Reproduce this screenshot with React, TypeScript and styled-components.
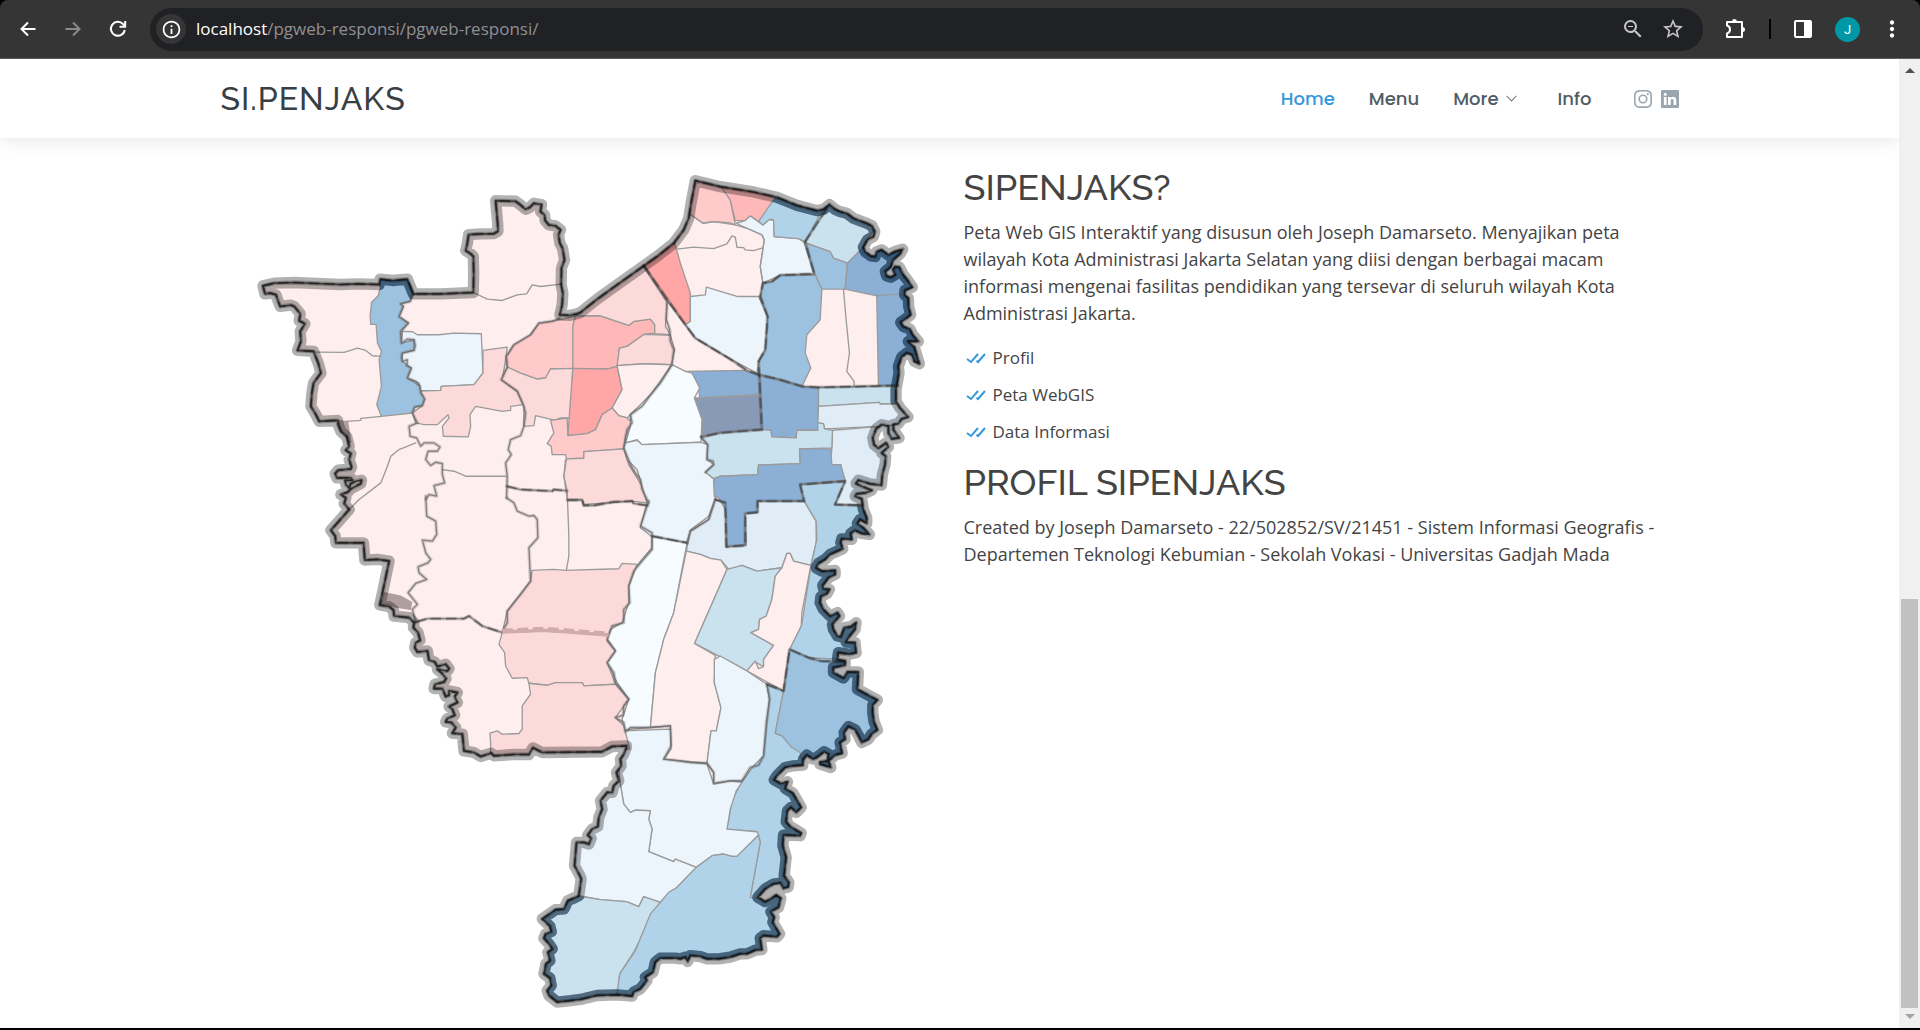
import React from "react";
import styled, { createGlobalStyle } from "styled-components";
import { BsInstagram, BsLinkedin, BsChevronDown } from "react-icons/bs";
import { BiCheckDouble } from "react-icons/bi";
import { MdInfoOutline, MdZoomOut, MdStarBorder, MdMoreVert } from "react-icons/md";

const GlobalStyle = createGlobalStyle`
  *, *::before, *::after { box-sizing: border-box; }
  body { margin: 0; background: #000; color: #444; font-family: "Open Sans", "Noto Sans", sans-serif; font-size: 18px; line-height: 27px; }
  h1, h3, p, ul { margin: 0; padding: 0; }
  a { color: inherit; text-decoration: none; }
  button { border: 0; padding: 0; background: none; color: inherit; font: inherit; cursor: pointer; }
`;

/* ---------- browser frame ---------- */

const Window = styled.div`
  display: flex;
  flex-direction: column;
  min-height: 100vh;
  border-bottom: 2px solid #000;
`;

const Toolbar = styled.div`
  display: flex;
  align-items: center;
  height: 59px;
  padding: 0 14px 0 10px;
  background: #353535;
  border-bottom: 1px solid #5e5e5e;
  border-radius: 8px 8px 0 0;
  color: #fff;
`;

const ToolGroup = styled.div<{ $gap: number }>`
  display: flex;
  align-items: center;
  gap: ${(p) => p.$gap}px;
`;

const ToolButton = styled.button<{ $dim?: boolean; $size?: number }>`
  display: grid;
  place-items: center;
  width: ${(p) => p.$size ?? 35}px;
  height: ${(p) => p.$size ?? 35}px;
  border-radius: 50%;
  color: ${(p) => (p.$dim ? "#8a8a8a" : "#fff")};
`;

const Omnibox = styled.div`
  display: flex;
  flex: 1;
  align-items: center;
  height: 43px;
  margin: 0 16px 0 15px;
  padding: 0 18px 0 6px;
  border-radius: 22px;
  background: #202124;
  color: #c7c7c7;
`;

const SiteInfo = styled(ToolButton)`
  background: #353535;
`;

const Address = styled.div`
  flex: 1;
  padding-left: 10px;
  color: #8f9094;
  font-size: 17px;
  line-height: 24px;
  span { color: #fff; }
`;

const Divider = styled.span`
  width: 2px;
  height: 20px;
  background: #000;
`;

const Avatar = styled.button`
  width: 25px;
  height: 25px;
  border-radius: 50%;
  background: #0097a7;
  color: #fff;
  font: 13px/25px Roboto, sans-serif;
`;

const Viewport = styled.div`
  display: flex;
  flex: 1;
  background: #fff;
`;

const Page = styled.div`
  flex: 1;
  min-width: 0;
`;

const ScrollTrack = styled.div`
  display: flex;
  flex-direction: column;
  align-items: center;
  justify-content: space-between;
  width: 21px;
  padding: 9px 2px;
  background: #f0f0f0;
`;

const ScrollArrow = styled.span<{ $down?: boolean }>`
  border: 5px solid transparent;
  border-top: ${(p) => (p.$down ? "5px solid #a3a3a3" : "0")};
  border-bottom: ${(p) => (p.$down ? "0" : "5px solid #505050")};
`;

const ScrollBody = styled.div`
  display: flex;
  flex: 1;
  flex-direction: column;
  justify-content: flex-end;
  width: 17px;
  padding: 6px 0;
`;

const ScrollThumb = styled.div`
  height: 44%;
  background: #c1c1c1;
`;

/* ---------- site ---------- */

const Header = styled.header`
  height: 79px;
  box-shadow: 0 2px 17px rgba(0, 0, 0, 0.1);
  clip-path: inset(0 0 -40px 0);
`;

const Container = styled.div`
  display: flex;
  align-items: center;
  height: 100%;
  max-width: 1486px;
  margin: 0 auto;
  padding: 0 14px;
`;

const Logo = styled.h1`
  flex: 1;
  color: #384046;
  font: 500 32px/40px Raleway, Lato, sans-serif;
  letter-spacing: 1px;
`;

const Nav = styled.nav`
  display: flex;
  align-items: center;
  gap: 34px;
  font: 500 18px/27px Poppins, Inter, sans-serif;
`;

const NavLink = styled.a<{ $active?: boolean; $menu?: boolean }>`
  display: flex;
  align-items: center;
  gap: 6px;
  padding-right: ${(p) => (p.$menu ? 6 : 0)}px;
  color: ${(p) => (p.$active ? "#3498db" : "#4f5c66")};
`;

const Social = styled.div`
  display: flex;
  gap: 9px;
  padding-left: 8px;
  color: #9aa6af;
  a { display: flex; }
`;

const Columns = styled.main`
  display: grid;
  grid-template-columns: 1fr 1fr;
  gap: 28px;
  max-width: 1486px;
  margin: 0 auto;
  padding: 22px 14px 12px;
`;

const MapFigure = styled.svg`
  display: block;
  width: 100%;
  height: auto;
`;

const About = styled.section`
  padding-top: 6px;
`;

const Title = styled.h3`
  margin-bottom: 10px;
  font: 500 36px/43px Raleway, Lato, sans-serif;
`;

const Features = styled.ul`
  padding: 17px 0 6px;
  list-style: none;
`;

const Feature = styled.li`
  display: flex;
  align-items: center;
  gap: 5px;
  padding-bottom: 10px;
  font-size: 17px;
  svg { color: #3498db; }
`;

/* ---------- district map ---------- */

type Sheet = [number, number];
const NW: Sheet = [0, 0];
const NE: Sheet = [1020, 0];
const W: Sheet = [180, 900];
const E: Sheet = [1080, 900];
const S: Sheet = [780, 1710];

/* moves points of one survey sheet into the common map grid */
const at = ([ox, oy]: Sheet, points: string) =>
  points
    .trim()
    .split(/\s+/)
    .map((p) => {
      const [x, y] = p.split(",").map(Number);
      return `${x + ox},${y + oy}`;
    })
    .join(" ");

const border = [
  at(NW, "66,378 100,370 160,368 230,371 300,374 350,372 415,374 418,358 455,362 500,358 518,402 600,402 698,398 699,340 698,290 690,282 675,272 680,250 684,224 720,222 760,221 772,214 771,190 765,122 825,124 840,135 855,148 868,142 880,130 903,134 900,155 912,165 914,182 925,195 945,198 960,210 954,225 958,250 966,265 972,300 963,325 962,375 967,400 965,435 958,465 985,467 1010,462"),
  at(NE, "0,458 50,418 100,382 190,318 235,286 280,250 310,210 325,175 332,130 345,62 420,80 520,96 590,112 650,136 710,152 730,148 748,134 765,148 780,155 800,160 820,175 860,190 876,198 884,215 880,230 862,240 850,262 855,275 872,288 885,290 890,275 905,270 925,285 945,275 968,268 960,282 940,300 932,322 916,335 920,348 932,352 945,345 938,330 945,320 958,322 970,345 982,360 997,382 975,392 974,405 985,415 986,440 992,465 980,475 962,488 970,500 990,508 998,525 1015,545 985,545 1003,562 1018,612 1003,605 995,585 980,580 965,592 955,620 957,640 948,690 948,725 960,745 984,772 965,778 955,792 940,795 940,810 957,835 935,838 925,820 925,800 905,795 888,808 878,835 882,855 895,866 918,850 925,862 905,880 917,890 915,915 907,945 904,977 870,973 835,962 828,972 845,980 875,992 858,1000 830,1003"),
  at(E, "765,110 785,118 790,150 800,175 800,192 780,180 772,192 790,205 808,225 785,222 765,213 752,222 755,240 725,238 722,250 728,268 690,285 675,300 655,312 648,325 665,335 705,333 705,345 685,355 668,378 670,388 688,390 680,403 662,412 660,430 670,450 690,470 712,460 718,470 697,495 700,510 712,530 722,532 732,505 752,502 768,490 765,510 745,535 738,548 765,550 768,580 748,585 715,580 712,600 735,605 735,618 700,625 700,640 730,656 742,638 775,638 772,690 800,705 832,722 818,738 818,760 822,788 832,812 815,825 805,840 785,850 775,830 765,812 745,802 732,820 735,840 720,850 726,882 705,888 685,905 692,925 660,915 660,908 682,905 685,885 672,878 650,895 638,900 620,888 610,900 608,918 580,920 555,925 530,950"),
  at(S, "822,152 842,163 862,158 855,178 878,192 890,212 903,235 888,250 872,235 862,245 858,278 870,292 903,312 900,320 850,318 848,350 858,385 852,440 866,460 864,474 850,478 840,462 820,465 795,480 773,505 795,518 810,510 828,498 842,508 835,535 812,548 822,565 818,580 838,615 830,624 790,620 780,628 785,662 765,664 740,675 720,675 690,685 655,690 620,690 600,683 570,680 562,698 555,685 540,690 525,688 480,688 465,700 458,730 435,745 440,755 420,780 400,790 395,802 350,798 290,800 240,812 205,816 170,820 145,800 140,785 152,770 148,748 130,735 136,705 148,695 142,670 155,660 145,645 130,628 135,615 152,608 148,592 125,570 165,542 190,540 202,515 225,505 235,500 242,450 238,440 222,410 228,340 250,340 265,345 272,328 262,318 275,300 292,292 295,265 305,240 300,215 320,190 335,190 340,170 355,155 348,130 362,110 360,90 370,75 378,55"),
  at(W, "978,860 935,862 905,878 725,880 697,866 685,886 640,886 580,890 572,882 540,892 520,880 490,875 485,825 455,822 465,805 452,790 435,788 440,778 462,768 455,750 445,742 470,730 462,712 470,700 445,695 445,708 435,712 425,688 400,688 403,675 430,668 436,658 422,640 410,630 440,635 445,628 435,615 410,622 402,608 385,603 380,575 350,578 342,565 345,550 358,543 352,520 338,505 340,490 325,475 280,470 278,452 265,442 237,437 245,400 265,305 230,300 192,302 188,250 105,250 103,230 90,212 145,150 130,132 135,115 120,105 140,98 150,88 180,72 182,62 165,65 150,72 145,85 135,75 133,62 155,62 150,55 108,55 103,42 112,32 150,28"),
  at(NW, "332,922 325,900 330,882 315,872 325,860 318,832 300,815 292,795 290,782 235,785 225,765 210,740 213,700 218,670 240,640 232,610 218,575 170,572 180,545 178,515 192,492 175,483 178,462 160,440 150,436 118,440 112,425 105,405 88,400 72,402"),
].join(" ");

const tone = {
  rose0: "#feeeee",
  rose1: "#fddada",
  rose2: "#ffcaca",
  rose3: "#ffb8b8",
  rose4: "#ffa6a6",
  ice: "#f6fcff",
  sky0: "#edf5fc",
  sky1: "#e0ecf6",
  sky2: "#cae1ee",
  sky3: "#b0d3e9",
  sky4: "#9dc2e0",
  sky5: "#8bafd5",
  slate: "#899ab7",
};

const regions: [keyof typeof tone, Sheet, string][] = [
  ["sky4", NW, "415,350 418,385 412,408 392,428 388,470 390,494 406,494 410,550 422,575 415,600 422,680 408,735 422,770 515,760 522,742 545,738 552,718 538,680 500,655 512,625 485,605 485,580 520,572 520,540 482,550 480,515 503,490 475,470 488,440 480,432 508,425 518,402 500,350"],
  ["sky0", NW, "485,515 515,516 530,525 595,525 640,520 722,522 727,640 700,675 602,680 600,692 540,694 535,670 500,655 512,625 485,605 485,580 520,572 520,540 482,550"],
  ["rose1", NW, "727,572 800,562 795,600 785,660 830,695 848,735 810,740 810,752 785,755 705,740 688,765 690,800 683,832 608,830 605,800 625,775 622,765 590,795 550,795 525,790 515,760 545,738 552,718 540,694 600,692 602,680 700,675 727,640"],
  ["rose2", NW, "1005,468 958,480 895,490 870,525 820,555 797,590 800,622 840,640 890,658 915,655 930,628 997,626 997,500"],
  ["rose1", NW, "800,622 840,640 890,658 915,655 930,628 997,626 990,775 960,775 945,782 885,768 880,798 850,800 850,740 830,695 782,660"],
  ["rose3", NW, "997,626 997,500 1005,468 1080,468 1165,497 1180,485 1230,478 1243,495 1243,520 1210,524 1160,560 1137,565 1130,620 1100,628"],
  ["rose4", NW, "997,626 1100,628 1130,620 1145,690 1115,745 1085,765 1065,810 1040,822 982,828"],
  ["rose1", NW, "1010,462 1212,310 1280,425 1275,500 1290,525 1243,522 1243,495 1230,478 1180,485 1165,497 1080,468 1005,468"],
  ["rose1", NW, "1137,565 1160,560 1210,524 1290,527 1303,570 1293,615 1210,612 1130,618"],
  ["rose0", NW, "1130,618 1210,612 1293,615 1240,700 1170,765 1160,775 1135,768 1115,745 1145,690"],
  ["rose2", NW, "982,828 1040,822 1065,810 1085,765 1115,745 1135,768 1160,775 1175,790 1155,830 1150,868 1030,876 1030,896 978,898 975,885 935,885 932,860 920,852 940,820 930,782 980,775"],
  ["rose1", NW, "978,898 1030,896 1030,876 1150,868 1165,915 1205,980 1220,1030 1175,1025 1100,1030 1030,1035 1025,1020 980,1020 970,950"],
  ["rose4", NE, "185,310 280,240 300,310 330,400 330,490 315,495 250,410"],
  ["rose2", NE, "325,160 340,50 420,70 450,120 465,195 445,188 400,185 368,190"],
  ["rose3", NE, "415,70 595,105 535,185 510,168 495,182 465,182 450,120"],
  ["sky0", NE, "468,190 495,182 510,168 548,195 568,178 580,182 582,230 655,236 672,248 702,342 600,346 548,370 540,320 552,240 545,225 500,205"],
  ["sky3", NE, "590,105 750,135 675,245 655,236 582,230 580,180 568,178 548,195 535,185"],
  ["sky2", NE, "742,120 900,180 850,262 802,310 760,295 750,275 675,248"],
  ["sky4", NE, "672,248 750,275 760,295 802,310 795,388 725,388 705,345"],
  ["sky5", NE, "850,262 1020,230 1030,400 890,408 795,388 802,310"],
  ["sky5", NE, "890,408 1040,395 1040,680 895,678"],
  ["sky4", NE, "548,370 575,365 600,346 705,345 725,388 720,480 680,525 675,580 692,625 665,680 600,660 535,645 535,605 555,570 562,470 540,410"],
  ["sky0", NE, "330,410 375,405 378,382 470,410 535,410 562,470 555,570 535,605 530,640 440,592 345,535 315,495 330,485"],
  ["sky5", NE, "315,635 490,632 540,645 540,705 358,715 355,680 340,660"],
  ["slate", NE, "342,715 358,715 530,706 540,710 545,810 420,820 365,828 365,780 345,745"],
  ["sky5", NE, "540,645 665,680 715,683 713,812 650,812 648,835 575,832 572,812 545,810"],
  ["sky2", NE, "715,683 960,678 990,733 900,733 898,728 715,740"],
  ["sky1", NE, "715,740 898,728 900,733 1000,733 1000,790 900,800 733,808 730,792 713,790"],
  ["sky1", NE, "757,812 755,865 752,915 782,915 785,955 795,960 765,1035 850,1035 960,1000 970,795 900,800"],
  ["sky2", NE, "362,835 420,820 545,810 572,812 575,832 648,835 650,812 713,812 713,790 730,792 733,808 757,812 755,865 658,868 660,912 535,916 532,945 420,950 400,958 375,938 400,915 380,900 382,855"],
  ["ice", NE, "275,615 315,635 335,640 358,685 342,715 365,780 362,848 185,855 170,840 135,850 150,800 150,765 215,700"],
  ["sky0", NE, "130,865 135,850 170,842 185,855 362,848 382,855 380,900 400,915 375,938 400,958 405,1018 385,1070 330,1112 320,1150 215,1132 180,1105 200,1030 170,930 140,900"],
  ["sky1", E, "345,120 375,130 378,262 435,258 435,162 472,158 472,125 612,125 648,185 648,250 632,318 580,305 570,282 560,282 545,325 470,335 425,318 388,332 362,302 330,297 300,285 258,275 270,215 325,180"],
  ["sky5", NE, "400,958 420,950 532,945 535,916 660,912 658,868 752,868 755,915 782,915 795,962 660,975 672,1025 532,1025 532,1060 495,1062 498,1155 440,1162 435,1050 415,1015 402,1010"],
  ["ice", E, "155,230 260,250 220,460 190,540 165,640 150,805 70,812 65,780 85,720 50,670 20,610 45,575 20,540 35,500 70,480 85,350 125,300 155,265"],
  ["rose0", E, "258,275 300,285 330,297 362,302 380,330 283,552 345,588 342,670 362,745 348,815 332,815 320,912 190,900 212,860 210,800 150,805 165,640 190,540 220,460"],
  ["sky2", E, "380,330 425,318 470,335 545,325 525,350 515,420 498,470 478,480 475,510 452,520 520,558 490,600 490,622 465,608 440,635 283,552"],
  ["sky3", E, "600,75 735,65 705,135 785,138 880,300 820,600 720,605 625,595 568,570 605,495 632,320 650,240 648,185 612,125"],
  ["rose0", E, "545,325 560,282 570,282 580,305 632,318 605,460 603,500 568,570 550,695 440,635 465,605 475,628 490,622 490,600 520,558 452,520 475,510 478,480 498,470 515,420 525,350"],
  ["sky0", E, "342,600 360,590 440,635 500,675 508,720 490,895 470,920 425,965 390,965 340,975 340,940 320,912 332,815 348,815 362,745 342,670"],
  ["sky3", S, "800,-135 850,-115 825,12 845,20 910,75 940,100 940,510 750,505 780,340 775,318 770,308 680,300 695,215 720,165 760,110 790,80 808,-90"],
  ["sky4", E, "568,570 625,595 730,600 900,620 900,950 610,930 600,880 575,865 545,830 525,822 550,695"],
  ["sky0", S, "370,5 510,0 512,60 490,90 620,105 640,165 690,155 725,160 708,185 690,240 680,300 770,308 775,318 710,382 695,382 670,375 635,380 588,415 525,390 520,398 445,368 455,300 445,270 450,245 405,243 390,250 370,225 358,155 350,60"],
  ["sky0", S, "358,155 370,225 390,250 405,243 450,245 445,270 455,300 445,368 520,398 525,390 588,415 530,475 480,520 430,503 415,533 378,518 300,512 235,500 180,400 200,300 270,200"],
  ["sky2", S, "225,500 300,512 378,518 415,533 430,503 480,520 440,590 400,670 358,735 350,810 200,850 80,820 100,540"],
  ["sky3", S, "480,520 505,490 530,475 588,415 635,380 670,375 695,382 710,382 775,318 780,340 750,505 790,510 880,490 880,710 480,720 400,830 348,805 358,735 405,665 450,555"],
  ["rose1", W, "695,333 760,330 795,333 955,328 965,312 1010,315 985,380 985,430 965,490 930,510 925,525 720,515 605,520 620,455 690,365"],
  ["rose1", W, "605,520 720,515 925,525 920,545 945,575 920,610 945,675 850,680 845,670 765,670 740,678 685,672 680,655 635,657 615,620 612,580 595,555"],
  ["rose1", W, "685,672 740,678 765,670 845,670 850,680 945,675 985,720 945,775 970,800 988,870 700,890 570,900 570,850 568,822 590,815 605,825 655,823 665,810 665,740 690,705"],
];

const hairlines: [Sheet, string][] = [
  [NW, "225,577 310,578 350,565 375,572 395,588 420,590"],
  [NW, "318,785 360,782 360,776 422,770"],
  [NW, "698,398 740,418 785,422 830,405 858,402 875,375 900,380 962,373"],
  [NW, "525,850 475,870 450,890 440,920 420,970 355,1020 325,1050"],
  [NW, "605,930 640,935 675,950 795,950"],
  [W, "795,0 790,50 800,95 805,230 805,290 798,330"],
  [NE, "332,165 368,190 400,185 465,195 500,205 545,225 552,240 540,320 548,370"],
  [NE, "290,268 340,262 400,266 440,252 455,228 465,232 470,262 490,263 495,270 520,272 545,265"],
  [NE, "790,388 798,480 808,580 800,635 822,665 822,678"],
];

const districtLines: [Sheet, string][] = [
  [NW, "518,402 508,425 480,432 488,440 475,470 503,490 480,515 482,550 500,538 520,540 524,558 520,572 485,580 482,592 485,605 500,600 498,618 512,625 500,655 525,665 538,680 540,700 552,718 545,738 522,742 515,760 530,790 505,800 508,830 528,835 540,860 550,850 580,850 598,862 590,875 562,875 555,900 570,918 585,908 605,912 605,945 612,970 580,978 588,1010 565,1005 555,1020"],
  [W, "375,110 378,170 405,185 408,225 395,245 365,242 375,280 390,300 382,310 352,322 355,340 378,360 345,372 322,400 350,435 335,450 345,488"],
  [NW, "958,475 935,485 895,490 870,525 820,555 797,590 800,622 782,660 830,695 848,735 855,760 850,800 840,828 810,840 803,870 812,885 795,910 800,950 798,1015"],
  [W, "618,115 640,130 650,155 685,170 700,168 710,180 712,235 685,265 690,365 660,405 620,455 620,490 605,518"],
  [NE, "190,318 260,425 258,480 268,510 270,545 280,570 275,615 240,670 215,700 185,740 150,765 155,790 140,810 130,865 150,915 165,940 180,960 185,990 205,1030"],
  [E, "145,125 120,200 155,220 155,270 125,305 100,335 85,380 88,430 70,450 70,490 35,500 20,540 45,575 20,610 40,640 45,670 85,720 70,740 68,768 45,775 70,790 75,818 90,805 150,805 210,800 212,860 190,900 235,905 270,910 320,912 340,940 340,972 390,965 425,965 450,925 475,918 490,890 498,790 508,720 500,675"],
  [NE, "375,938 400,915 398,905 380,900 382,855 362,832"],
  [E, "345,120 335,150 325,180 270,215 260,250"],
];

const dashedLines: [Sheet, string][] = [
  [W, "345,488 380,478 490,478 505,470 545,500 600,518"],
  [W, "618,80 660,90 755,95 760,90 800,94"],
  [W, "800,122 845,122 850,138 880,138 940,127 995,125 1000,132 1042,138"],
  [NE, "190,318 315,495 345,535 440,592 500,632 535,645 600,660 665,680 715,683 955,678"],
  [NE, "740,145 675,245 702,342 600,346 575,365 548,370 540,410 562,470 555,570 535,605 540,710 545,810 420,820 362,832"],
  [E, "345,120 375,130 378,262 435,258 435,162 472,158 472,125 612,125 600,75 735,65 705,135 785,138"],
  [E, "155,230 260,250"],
  [E, "500,675 550,695 568,570 625,595 660,605 730,608"],
];

const deepTones = ["sky2", "sky3", "sky4", "sky5"];

const DistrictMap = () => (
  <MapFigure viewBox="-60 0 2148 2568" role="img" aria-label="Peta Kota Administrasi Jakarta Selatan">
    <defs>
      <clipPath id="land">
        <polygon points={border} />
      </clipPath>
      <clipPath id="deep">
        {regions
          .filter(([t]) => deepTones.includes(t))
          .map(([, s, pts], i) => (
            <polygon key={i} points={at(s, pts)} />
          ))}
      </clipPath>
    </defs>
    <g clipPath="url(#land)">
      <polygon points={border} fill={tone.rose0} />
      {regions.map(([t, s, pts], i) => (
        <polygon key={i} points={at(s, pts)} fill={tone[t]} stroke="#9b9b9b" strokeWidth="4" strokeLinejoin="round" />
      ))}
      <polygon points={at(W, "250,398 300,408 335,428 330,452 285,445 240,435")} fill="#b09f9f" />
      <polygon points={at(NW, "288,780 322,784 332,850 315,850")} fill="#b09f9f" />
      <g clipPath="url(#deep)">
        <polygon points={border} fill="none" stroke="#003c6e" strokeOpacity="0.42" strokeWidth="34" strokeLinejoin="round" />
      </g>
    </g>
    <g fill="none" strokeLinejoin="round" strokeLinecap="round">
      {hairlines.map(([s, pts], i) => (
        <polyline key={i} points={at(s, pts)} stroke="#9b9b9b" strokeWidth="4" />
      ))}
      {[...districtLines, ...dashedLines].map(([s, pts], i) => (
        <polyline key={i} points={at(s, pts)} stroke="#000" strokeOpacity="0.14" strokeWidth="11" />
      ))}
      {[...districtLines, ...dashedLines].map(([s, pts], i) => (
        <polyline key={i} points={at(s, pts)} stroke="#6e6e6e" strokeOpacity="0.8" strokeWidth="4" />
      ))}
    </g>
    <g fill="none" strokeLinejoin="round">
      {dashedLines.map(([s, pts], i) => (
        <polyline key={i} points={at(s, pts)} stroke="#000" strokeOpacity="0.26" strokeWidth="8" strokeDasharray="32 14" />
      ))}
      <polyline points={at(W, "605,514 735,508 925,523")} stroke="#cfabab" strokeWidth="12" strokeDasharray="32 14" />
      <polyline points={at(W, "605,518 735,513 925,527")} stroke="#cfabab" strokeWidth="10" />
      <polygon points={border} stroke="#000" strokeOpacity="0.3" strokeWidth="34" />
      <polygon points={border} stroke="#000" strokeOpacity="0.22" strokeWidth="13" />
      <polygon points={border} stroke="#000" strokeOpacity="0.6" strokeWidth="5" />
      <polygon points={border} stroke="#000" strokeOpacity="0.3" strokeWidth="8" strokeDasharray="32 14" />
    </g>
  </MapFigure>
);

/* ---------- toolbar icons ---------- */

const Glyph = ({ d, size = 20 }: { d: string; size?: number }) => (
  <svg width={size} height={size} viewBox="0 0 20 20" fill="none" stroke="currentColor" strokeWidth="2">
    <path d={d} />
  </svg>
);

const backArrow = "M17.5 10H4M10 3.5 3.5 10 10 16.5";
const forwardArrow = "M2.5 10H16M10 3.5 16.500 10 10 16.5";
const reload = "M16.800 11A7 7 0 1 1 15 5L17 7.500M17.200 2V7.700H11.500";

const PuzzleIcon = () => (
  <svg width="24" height="24" viewBox="0 0 24 24" fill="none" stroke="#fff" strokeWidth="2" strokeLinejoin="round">
    <path d="M4 5H19V20H4V16.500C8 15.500 8 9.500 4 8.500Z" />
    <path d="M9 4.500A2.500 2.500 0 0 1 14 4.500ZM19.500 10A2.500 2.500 0 0 1 19.500 15Z" fill="#fff" stroke="none" />
  </svg>
);

const SidePanelIcon = () => (
  <svg width="20" height="20" viewBox="0 0 20 20" fill="none">
    <rect x="2" y="2" width="16" height="16" rx="1" stroke="#fff" strokeWidth="2" />
    <rect x="11" y="2" width="7" height="16" fill="#fff" />
  </svg>
);

const features = ["Profil", "Peta WebGIS", "Data Informasi"];

export default function App() {
  return (
    <>
      <GlobalStyle />
      <Window>
        <Toolbar>
          <ToolGroup $gap={10}>
            <ToolButton aria-label="Back"><Glyph d={backArrow} /></ToolButton>
            <ToolButton aria-label="Forward" $dim><Glyph d={forwardArrow} /></ToolButton>
            <ToolButton aria-label="Reload"><Glyph d={reload} /></ToolButton>
          </ToolGroup>
          <Omnibox>
            <SiteInfo aria-label="Site information" $size={30}><MdInfoOutline size={21} /></SiteInfo>
            <Address><span>localhost</span>/pgweb-responsi/pgweb-responsi/</Address>
            <ToolGroup $gap={16}>
              <ToolButton aria-label="Zoom" $size={24}><MdZoomOut size={24} color="#c7c7c7" /></ToolButton>
              <ToolButton aria-label="Bookmark" $size={24}><MdStarBorder size={24} color="#c7c7c7" /></ToolButton>
            </ToolGroup>
          </Omnibox>
          <ToolGroup $gap={18}>
            <ToolButton aria-label="Extensions" $size={32}><PuzzleIcon /></ToolButton>
            <Divider />
            <ToolButton aria-label="Side panel" $size={28}><SidePanelIcon /></ToolButton>
            <Avatar aria-label="Profile">J</Avatar>
            <ToolButton aria-label="Menu" $size={28}><MdMoreVert size={26} /></ToolButton>
          </ToolGroup>
        </Toolbar>
        <Viewport>
          <Page>
            <Header>
              <Container>
                <Logo><a href="#home">SI.PENJAKS</a></Logo>
                <Nav>
                  <NavLink href="#home" $active>Home</NavLink>
                  <NavLink href="#menu">Menu</NavLink>
                  <NavLink href="#more" $menu>More <BsChevronDown size={13} /></NavLink>
                  <NavLink href="#info">Info</NavLink>
                  <Social>
                    <a href="#instagram" aria-label="Instagram"><BsInstagram size={18} /></a>
                    <a href="#linkedin" aria-label="LinkedIn"><BsLinkedin size={18} /></a>
                  </Social>
                </Nav>
              </Container>
            </Header>
            <Columns>
              <DistrictMap />
              <About>
                <Title>SIPENJAKS?</Title>
                <p>
                  Peta Web GIS Interaktif yang disusun oleh Joseph Damarseto. Menyajikan peta wilayah Kota
                  Administrasi Jakarta Selatan yang diisi dengan berbagai macam informasi mengenai fasilitas
                  pendidikan yang tersevar di seluruh wilayah Kota Administrasi Jakarta.
                </p>
                <Features>
                  {features.map((f) => (
                    <Feature key={f}><BiCheckDouble size={24} />{f}</Feature>
                  ))}
                </Features>
                <Title>PROFIL SIPENJAKS</Title>
                <p>
                  Created by Joseph Damarseto - 22/502852/SV/21451 - Sistem Informasi Geografis - Departemen
                  Teknologi Kebumian - Sekolah Vokasi - Universitas Gadjah Mada
                </p>
              </About>
            </Columns>
          </Page>
          <ScrollTrack>
            <ScrollArrow />
            <ScrollBody><ScrollThumb /></ScrollBody>
            <ScrollArrow $down />
          </ScrollTrack>
        </Viewport>
      </Window>
    </>
  );
}
